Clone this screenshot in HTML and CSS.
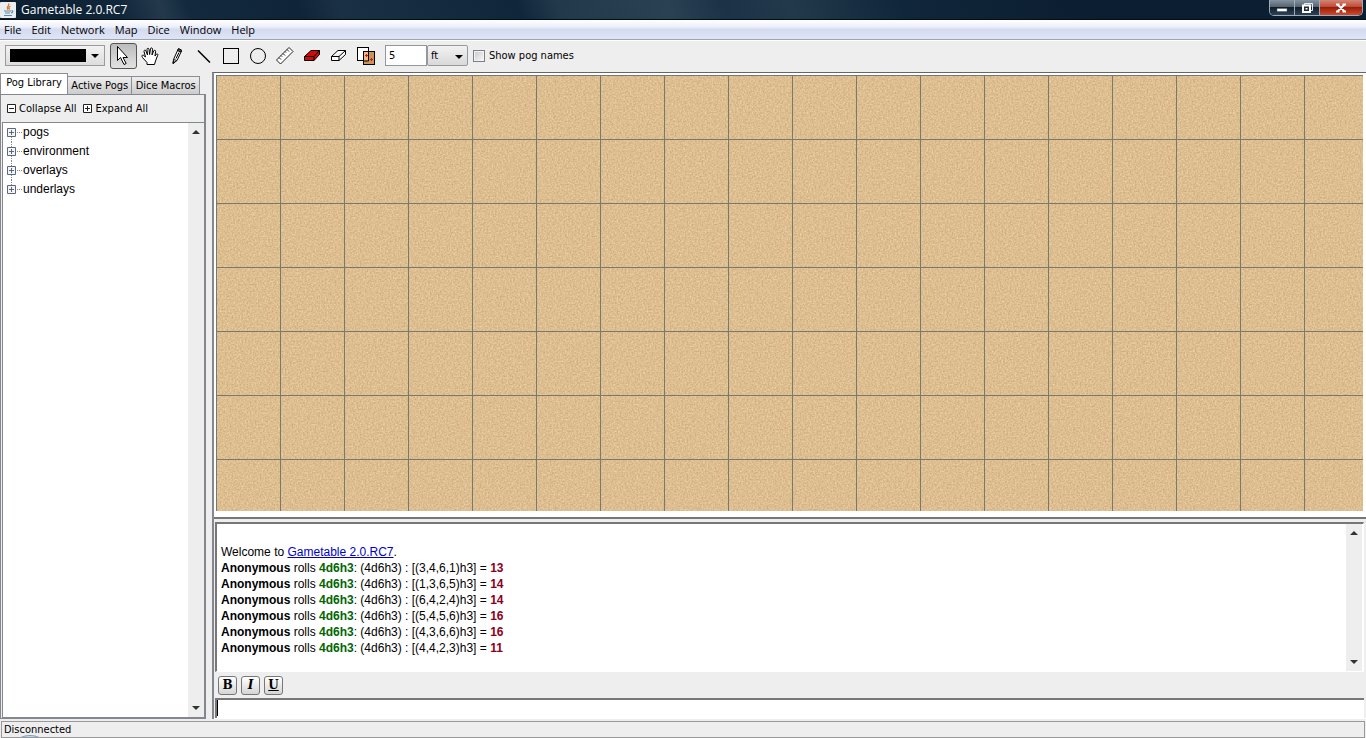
FILE: index.html
```
<!DOCTYPE html>
<html lang="en">
  <head>
    <meta charset="utf-8">
    <meta name="viewport" content="width=device-width, initial-scale=1.0">
    <title>Gametable 2.0.RC7</title>
    <link rel="stylesheet" href="styles.css">
  </head>
  <body>
    <header class="titlebar">
      <svg class="app-icon" width="16" height="16" viewBox="0 0 16 16">
        <rect x="0" y="0" width="16" height="16" rx="1" fill="#e9eef0"/>
        <path d="M8.500 1.500c2 2-3 3-.5 6M10.500 4c-2 1-2 2-.8 3.500" fill="none" stroke="#e0762d" stroke-width="1.300"/>
        <path d="M4 9h7M5 11h5M4 13.500h8M11.500 8.500c2 0 1.500 2-.5 2.500" fill="none" stroke="#5c87a8" stroke-width="1.200"/>
      </svg>
      <h1>Gametable 2.0.RC7</h1>
      <div class="window-buttons">
        <button type="button" class="minimize" aria-label="Minimize">
          <svg width="14" height="12" viewBox="0 0 14 12"><path d="M2 6.500h10v3H2z" fill="#fff" stroke="#4b5762" stroke-width=".5"/></svg>
        </button>
        <button type="button" class="restore" aria-label="Restore">
          <svg width="14" height="12" viewBox="0 0 14 12"><path d="M4.500 3V1.500h8v7H11" fill="none" stroke="#e8edf1"/><rect x="3" y="3.500" width="7" height="6.500" fill="#1d2c3d" stroke="#fff" stroke-width="2"/><path d="M5.500 6h2v1.500h-2z" fill="#fff"/></svg>
        </button>
        <button type="button" class="close" aria-label="Close">
          <svg width="14" height="12" viewBox="0 0 14 12"><path d="M3.500 2.500l7 7M10.500 2.500l-7 7M2 2.500h3.500M8.500 2.500H12M2 9.500h3.500M8.500 9.500H12" stroke="#fff" stroke-width="1.800"/></svg>
        </button>
      </div>
    </header>

    <nav class="menubar">
      <a href="#">File</a>
      <a href="#">Edit</a>
      <a href="#">Network</a>
      <a href="#">Map</a>
      <a href="#">Dice</a>
      <a href="#">Window</a>
      <a href="#">Help</a>
    </nav>

    <div class="toolbar">
      <button type="button" class="color-picker" aria-label="Color">
        <span class="swatch"></span>
        <svg width="8" height="4" viewBox="0 0 8 4"><path d="M0 0h8L4 4z"/></svg>
      </button>
      <div class="tools">
        <button type="button" class="tool selected" aria-label="Pointer">
          <svg width="20" height="20" viewBox="0 0 20 20"><path d="M4.500 .5v14l3-3 3.500 7 2.200-1-3.200-6h4.500z" fill="#fff" stroke="#000"/></svg>
        </button>
        <button type="button" class="tool" aria-label="Hand">
          <svg width="20" height="20" viewBox="0 0 20 20"><path d="M7 18.500v-2l-4.500-5c-1-1.500-.5-2.500.7-2.400L5.500 11 4 5.500C3.800 4 5.500 3.500 6 5l1.500 4L7 3.500c0-1.700 1.900-1.700 2 0l.6 5L10.500 3c.2-1.700 2.200-1.300 2 .2L12 9l1.700-4c.6-1.400 2.200-.8 1.900.5L15 10l1.300-1.700c.8-1 2-.2 1.400 1L15.500 15l-1 3.500z" fill="#fff" stroke="#000"/></svg>
        </button>
        <button type="button" class="tool" aria-label="Pencil">
          <svg width="20" height="20" viewBox="0 0 20 20"><path d="M6 17.500l.5-4L11 3.500 14.500 5 10 14.500l-4 3z" fill="#fff" stroke="#000"/><path d="M10.500 4.500L11.500 2.500l3 1.500-.8 2zM6 17.500l.3-2 1.500.7zM6.500 13.500l3.300 1M12 6.500l-3 6" fill="#555" stroke="#000"/></svg>
        </button>
        <button type="button" class="tool" aria-label="Line">
          <svg width="20" height="20" viewBox="0 0 20 20"><path d="M4 4.500l12 12" stroke="#000" stroke-width="1.500"/></svg>
        </button>
        <button type="button" class="tool" aria-label="Rectangle">
          <svg width="20" height="20" viewBox="0 0 20 20"><rect x="2.500" y="2.500" width="15" height="15" fill="none" stroke="#000"/></svg>
        </button>
        <button type="button" class="tool" aria-label="Circle">
          <svg width="20" height="20" viewBox="0 0 20 20"><circle cx="10" cy="10" r="7.500" fill="none" stroke="#000"/></svg>
        </button>
        <button type="button" class="tool" aria-label="Ruler">
          <svg width="20" height="20" viewBox="0 0 20 20"><path d="M1.500 14L14 1.500 18 5.500 5.500 18zM4 11.500l2 2M6 9.500l1.200 1.200M8 7.500l2 2M10 5.500l1.200 1.200M12 3.500l2 2" fill="#fff" stroke="#222"/></svg>
        </button>
        <button type="button" class="tool" aria-label="Eraser">
          <svg width="20" height="20" viewBox="0 0 20 20"><path d="M2.500 10.500L9 4.500h8.500v4L12 14.500H2.500z" fill="#d20909" stroke="#000"/><path d="M2.500 10.500H12l5.500-6M12 10.500v4" fill="none" stroke="#000"/></svg>
        </button>
        <button type="button" class="tool" aria-label="Line eraser">
          <svg width="20" height="20" viewBox="0 0 20 20"><path d="M2.500 10.500L9 4.500h7.500v4L10 14.500H2.500zM2.500 10.500H10l6.500-6M10 10.500v4" fill="#fff" stroke="#000"/></svg>
        </button>
        <button type="button" class="tool" aria-label="Hide pogs">
          <svg width="20" height="20" viewBox="0 0 20 20"><rect x="1.500" y="1.500" width="11" height="13" fill="#fff" stroke="#000"/><rect x="7.500" y="5.500" width="11" height="13" fill="#cc9257" stroke="#000"/><path d="M8 6h4.500v8.500H8z" fill="#f2b78a"/><path d="M12.500 6v9H8" fill="none" stroke="#000"/><path d="M10.500 8v3M9 9.500h3M15.500 12v3M14 13.500h3" fill="none" stroke="#c22612"/></svg>
        </button>
      </div>
      <div class="units">
        <input type="text" class="unit-size" value="5" aria-label="Grid unit size">
        <div class="unit-wrap">
          <select aria-label="Grid unit">
            <option>ft</option>
            <option>m</option>
            <option>u</option>
          </select>
          <svg width="8" height="4" viewBox="0 0 8 4"><path d="M0 0h8L4 4z"/></svg>
        </div>
      </div>
      <label class="pog-names"><input type="checkbox">Show pog names</label>
    </div>

    <main class="workspace">
      <aside class="sidebar">
        <div class="tabs" role="tablist">
          <button type="button" role="tab" class="tab active" aria-selected="true">Pog Library</button>
          <button type="button" role="tab" class="tab">Active Pogs</button>
          <button type="button" role="tab" class="tab">Dice Macros</button>
        </div>
        <div class="library">
          <div class="library-actions">
            <button type="button">
              <svg width="9" height="9" viewBox="0 0 9 9"><path d="M.5.5h8v8h-8zM2 4.500h5" fill="#fff" stroke="#222"/></svg>
              Collapse All
            </button>
            <button type="button">
              <svg width="9" height="9" viewBox="0 0 9 9"><path d="M.5.5h8v8h-8zM2 4.500h5M4.500 2v5" fill="#fff" stroke="#222"/></svg>
              Expand All
            </button>
          </div>
          <div class="tree-pane">
            <ul class="tree">
              <li><svg width="16" height="19" viewBox="0 0 16 19"><path d="M4.500 14v5M10 9.500h6" stroke="#888" stroke-dasharray="1 1"/><path d="M.5 5.500h8v8h-8zM2 9.500h5M4.500 7v5" fill="#f4f4f8" stroke="#5d6775"/></svg>pogs</li>
              <li><svg width="16" height="19" viewBox="0 0 16 19"><path d="M4.500 0v19M10 9.500h6" stroke="#888" stroke-dasharray="1 1"/><path d="M.5 5.500h8v8h-8zM2 9.500h5M4.500 7v5" fill="#f4f4f8" stroke="#5d6775"/></svg>environment</li>
              <li><svg width="16" height="19" viewBox="0 0 16 19"><path d="M4.500 0v19M10 9.500h6" stroke="#888" stroke-dasharray="1 1"/><path d="M.5 5.500h8v8h-8zM2 9.500h5M4.500 7v5" fill="#f4f4f8" stroke="#5d6775"/></svg>overlays</li>
              <li><svg width="16" height="19" viewBox="0 0 16 19"><path d="M4.500 0v5M10 9.500h6" stroke="#888" stroke-dasharray="1 1"/><path d="M.5 5.500h8v8h-8zM2 9.500h5M4.500 7v5" fill="#f4f4f8" stroke="#5d6775"/></svg>underlays</li>
            </ul>
            <div class="scrollbar">
              <svg width="8" height="4" viewBox="0 0 8 4"><path d="M0 4h8L4 0z"/></svg>
              <svg width="8" height="4" viewBox="0 0 8 4"><path d="M0 0h8L4 4z"/></svg>
            </div>
          </div>
        </div>
      </aside>

      <section class="table">
        <div class="map">
          <svg width="100%" height="100%">
            <defs>
              <filter id="sand" x="0" y="0" width="100%" height="100%" color-interpolation-filters="sRGB">
                <feTurbulence type="fractalNoise" baseFrequency=".6" numOctaves="2" seed="4"/>
                <feColorMatrix values=".2 0 0 0 .765  .22 0 0 0 .635  .26 0 0 0 .435  0 0 0 0 1"/>
              </filter>
              <pattern id="grid" width="64" height="64" patternUnits="userSpaceOnUse">
                <path d="M63 0h1v64h-1zM0 63h64v1H0z" fill="#7b796c"/>
              </pattern>
            </defs>
            <rect width="100%" height="100%" filter="url(#sand)"/>
            <rect width="100%" height="100%" fill="url(#grid)"/>
          </svg>
        </div>
        <div class="chat">
          <div class="log">
            <div class="messages">
              <p>Welcome to <a href="#">Gametable 2.0.RC7</a>.</p>
              <p><b>Anonymous</b> rolls <b class="dice">4d6h3</b>: (4d6h3) : [(3,4,6,1)h3] = <b class="total">13</b></p>
              <p><b>Anonymous</b> rolls <b class="dice">4d6h3</b>: (4d6h3) : [(1,3,6,5)h3] = <b class="total">14</b></p>
              <p><b>Anonymous</b> rolls <b class="dice">4d6h3</b>: (4d6h3) : [(6,4,2,4)h3] = <b class="total">14</b></p>
              <p><b>Anonymous</b> rolls <b class="dice">4d6h3</b>: (4d6h3) : [(5,4,5,6)h3] = <b class="total">16</b></p>
              <p><b>Anonymous</b> rolls <b class="dice">4d6h3</b>: (4d6h3) : [(4,3,6,6)h3] = <b class="total">16</b></p>
              <p><b>Anonymous</b> rolls <b class="dice">4d6h3</b>: (4d6h3) : [(4,4,2,3)h3] = <b class="total">11</b></p>
            </div>
            <div class="scrollbar">
              <svg width="8" height="4" viewBox="0 0 8 4"><path d="M0 4h8L4 0z"/></svg>
              <svg width="8" height="4" viewBox="0 0 8 4"><path d="M0 0h8L4 4z"/></svg>
            </div>
          </div>
          <div class="format">
            <button type="button" class="bold">B</button>
            <button type="button" class="italic">I</button>
            <button type="button" class="underline">U</button>
          </div>
          <input type="text" class="entry" aria-label="Chat message">
        </div>
      </section>
    </main>

    <footer class="status">Disconnected<span class="orb"></span></footer>
  </body>
</html>
```
FILE: styles.css
```
* {
  box-sizing: border-box;
}

body {
  margin: 0;
  height: 100vh;
  display: flex;
  flex-direction: column;
  overflow: hidden;
  background-color: #eee;
  font: 11px/14px 'DejaVu Sans Condensed', 'DejaVu Sans', sans-serif;
  color: #000;
}

button,
input,
select {
  margin: 0;
  padding: 0;
  font: inherit;
  color: inherit;
}

svg {
  display: block;
  flex: none;
}

/* window frame */

.titlebar {
  display: flex;
  flex: none;
  align-items: flex-start;
  height: 20px;
  padding-right: 3px;
  background: linear-gradient(70deg, #0c1f31 0%, #10263a 9%, #24394c 12%, #132a3e 14%, #0f2438 22%, #1a3044 25%, #10263a 38%, #22384b 41%, #2a4053 49%, #1c3246 53%, #22384b 58%, #10263a 66%, #0c1e31 80%);
  border-bottom: 1px solid #050d16;
}

.app-icon {
  margin-top: 2px;
}

.titlebar h1 {
  flex: 1;
  margin: 0 0 0 5px;
  font: 12px/19px 'Open Sans', 'Noto Sans', sans-serif;
  color: #fff;
}

.window-buttons {
  display: flex;
  height: 16px;
  border: 1px solid #9eabb6;
  border-top: 0;
  border-radius: 0 0 5px 5px;
  overflow: hidden;
}

.window-buttons button {
  display: flex;
  justify-content: center;
  align-items: center;
  width: 25px;
  border: 0;
  border-right: 1px solid #9eabb6;
  background: linear-gradient(#8592a0 0%, #55636f 45%, #111e2c 50%, #2d4358 100%);
}

.window-buttons .close {
  width: 42px;
  border-right: 0;
  background: linear-gradient(#d28577 0%, #bd4c38 45%, #9c1c08 50%, #cc4d30 100%);
}

.menubar {
  display: flex;
  flex: none;
  gap: 10px;
  height: 20px;
  padding: 0 4px;
  background: linear-gradient(#fff 0%, #edf0fa 35%, #d5dbf0 50%, #dfe4f6 100%);
  border-bottom: 1px solid #9aa5b0;
  font: 11px/20px 'Open Sans', 'Noto Sans', sans-serif;
}

.menubar a {
  color: #000;
  text-decoration: none;
}

/* toolbar */

.toolbar {
  display: flex;
  flex: none;
  align-items: center;
  height: 32px;
  padding: 0 0 2px 5px;
  border-top: 1px solid #fff;
}

.color-picker {
  display: flex;
  justify-content: space-between;
  align-items: center;
  width: 100px;
  height: 21px;
  padding: 0 5px 0 4px;
  border: 1px solid #9b9b9b;
  background: linear-gradient(#f2f2f2, #ddd);
}

.swatch {
  width: 76px;
  height: 13px;
  background-color: #000;
}

.tools {
  display: flex;
  margin-left: 5px;
}

.tool {
  display: flex;
  align-items: center;
  width: 27px;
  height: 26px;
  padding-left: 2px;
  border: 1px solid transparent;
  border-radius: 3px;
  background: none;
}

.tool.selected {
  border-color: #555;
  background: linear-gradient(#bcbcbc, #e2e2e2);
}

.units {
  display: flex;
  height: 21px;
  margin-left: 5px;
}

.unit-size {
  width: 42px;
  padding-left: 3px;
  border: 1px solid #8e98a5;
  background-color: #fff;
}

.unit-wrap {
  position: relative;
}

.unit-wrap select {
  width: 41px;
  height: 21px;
  padding-left: 3px;
  appearance: none;
  border: 1px solid #999;
  border-radius: 2px;
  background: linear-gradient(#f2f2f2, #d9d9d9);
}

.unit-wrap svg {
  position: absolute;
  top: 10px;
  right: 5px;
  pointer-events: none;
}

.pog-names {
  display: flex;
  align-items: center;
  gap: 4px;
  margin-left: 5px;
}

.pog-names input {
  width: 12px;
  height: 12px;
  appearance: none;
  border: 1px solid #7b8087;
  background: linear-gradient(135deg, #c9c9c9, #fafafa);
  box-shadow: inset 0 0 0 1px #f3f3f3;
}

/* sidebar */

.workspace {
  display: flex;
  flex: 1;
  min-height: 0;
}

.sidebar {
  display: flex;
  flex: none;
  flex-direction: column;
  width: 206px;
}

.tabs {
  display: flex;
  align-items: flex-end;
  height: 22px;
  padding-right: 6px;
}

.tab {
  flex: 1 0 auto;
  height: 18px;
  border: 1px solid #8a8d94;
  border-width: 1px 1px 0 0;
  background: linear-gradient(#eee, #ccc);
  white-space: nowrap;
}

.tab.active {
  height: 21px;
  padding: 0 2px 2px;
  border-left-width: 1px;
  background: #fff;
}

.library {
  display: flex;
  flex: 1;
  flex-direction: column;
  min-height: 0;
  border: 1px solid #84878e;
  border-right-width: 2px;
}

.library-actions {
  display: flex;
  flex: none;
  align-items: center;
  gap: 7px;
  height: 27px;
  padding-left: 6px;
}

.library-actions button {
  display: flex;
  align-items: center;
  gap: 3px;
  border: 0;
  background: none;
}

.tree-pane {
  display: flex;
  flex: 1;
  min-height: 0;
  margin-left: 1px;
  border: 1px solid #84878e;
  border-right: 0;
  background-color: #fff;
}

.tree {
  flex: 1;
  margin: 0;
  padding: 0 4px;
  list-style: none;
  font: 12px/19px 'Liberation Sans', Arial, sans-serif;
}

.tree li {
  display: flex;
}

.scrollbar {
  display: flex;
  flex: none;
  flex-direction: column;
  justify-content: space-between;
  align-items: center;
  width: 16px;
  padding: 7px 0;
  background-color: #eee;
  fill: #333;
}

/* map and chat */

.table {
  display: flex;
  flex: 1;
  flex-direction: column;
  min-width: 0;
  margin-left: 6px;
  border-left: 2px solid #84878e;
  border-top: 1px solid #666;
}

.map {
  flex: 1;
  min-height: 0;
  padding: 2px 3px 6px 2px;
  background-color: #fff;
}

.map svg {
  border: 1px solid #777;
  border-width: 1px 0 0 1px;
}

.chat {
  flex: none;
  padding: 3px 2px 0 1px;
  border-top: 2px solid #777;
  border-bottom: 1px solid #fff;
}

.log {
  display: flex;
  height: 150px;
  padding-right: 1px;
  border: 2px solid #777;
  border-right: 1px solid #fff;
  border-bottom: 1px solid #fff;
  background-color: #fff;
}

.messages {
  flex: 1;
  padding: 20px 4px 0;
  font: 12px/16px 'Liberation Sans', Arial, sans-serif;
}

.messages p {
  margin: 0;
}

.messages a {
  color: #00c;
}

.dice {
  color: #060;
}

.total {
  color: #8c0020;
}

.format {
  display: flex;
  align-items: center;
  gap: 4px;
  height: 26px;
  padding-left: 3px;
}

.format button {
  width: 19px;
  height: 19px;
  border: 1px solid #777;
  border-radius: 3px;
  background: linear-gradient(#fff, #d5d5d5);
  font: bold 12px/16px 'DejaVu Serif', serif;
}

.format .italic {
  font-style: italic;
}

.format .underline {
  text-decoration: underline;
}

.entry {
  display: block;
  width: 100%;
  height: 20px;
  border: 2px solid #777;
  border-right: 0;
  border-bottom: 0;
  background: linear-gradient(#000, #000) 0 0 / 1px 16px no-repeat #fff;
  font: 12px/16px 'Liberation Sans', Arial, sans-serif;
  outline: none;
}

.status {
  position: relative;
  flex: none;
  height: 17px;
  margin: 2px 1px 0;
  padding-left: 2px;
  border: 1px solid #999;
  line-height: 15px;
  overflow: hidden;
}

/* top of the start button showing over the window edge */
.orb {
  position: absolute;
  left: 14px;
  top: 13px;
  width: 28px;
  height: 16px;
  border: 1px solid #7d9cbb;
  border-radius: 50%;
  background-color: #c5dcef;
}
```
